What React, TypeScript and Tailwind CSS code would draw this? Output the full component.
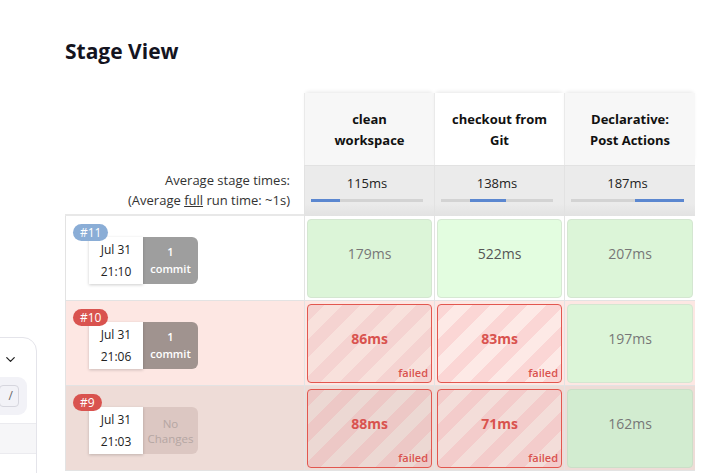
import { ChevronDown } from "lucide-react"

type Cell = { time: string; failed?: boolean; tone: string; stripes?: string }

interface RowProps {
  id: string
  badge: string
  time: string
  rowBg: string
  changes: "commit" | "none"
  changeBg: string
  cells: Cell[]
}

const stages = [
  { name: ["clean", "workspace"], avg: "115ms", bg: "bg-[#f7f7f7]" },
  { name: ["checkout from", "Git"], avg: "138ms", bg: "bg-white" },
  { name: ["Declarative:", "Post Actions"], avg: "187ms", bg: "bg-[#f7f7f7]" },
]

const rows: RowProps[] = [
  {
    id: "#11",
    badge: "bg-[#8aadd6]",
    time: "21:10",
    rowBg: "bg-white",
    changes: "commit",
    changeBg: "bg-[#9e9e9e]",
    cells: [
      { time: "179ms", tone: "bg-[#dcf5d8] border-[#d4e6d1] text-[#777]" },
      { time: "522ms", tone: "bg-[#e3fde0] border-[#d6e8d3] text-[#555]" },
      { time: "207ms", tone: "bg-[#dcf5d8] border-[#d4e6d1] text-[#777]" },
    ],
  },
  {
    id: "#10",
    badge: "bg-[#d9534f]",
    time: "21:06",
    rowBg: "bg-[#fde7e3]",
    changes: "commit",
    changeBg: "bg-[#a0938f]",
    cells: [
      {
        time: "86ms",
        failed: true,
        tone: "border-[#e2574f]",
        stripes:
          "bg-[repeating-linear-gradient(-45deg,#f5d3d1_0px,#f5d3d1_13px,#f8e1dc_13px,#f8e1dc_26px)]",
      },
      {
        time: "83ms",
        failed: true,
        tone: "border-[#e2574f]",
        stripes:
          "bg-[repeating-linear-gradient(-45deg,#fbd6d5_0px,#fbd6d5_13px,#fde9e6_13px,#fde9e6_26px)]",
      },
      { time: "197ms", tone: "bg-[#dcf5d8] border-[#d4e6d1] text-[#777]" },
    ],
  },
  {
    id: "#9",
    badge: "bg-[#d9534f]",
    time: "21:03",
    rowBg: "bg-[#eedcd7]",
    changes: "none",
    changeBg: "bg-[#dcc7c2]",
    cells: [
      {
        time: "88ms",
        failed: true,
        tone: "border-[#e2574f]",
        stripes:
          "bg-[repeating-linear-gradient(-45deg,#edc8c6_0px,#edc8c6_13px,#ecd8d3_13px,#ecd8d3_26px)]",
      },
      {
        time: "71ms",
        failed: true,
        tone: "border-[#e2574f]",
        stripes:
          "bg-[repeating-linear-gradient(-45deg,#f3cccb_0px,#f3cccb_13px,#f3ddd9_13px,#f3ddd9_26px)]",
      },
      { time: "162ms", tone: "bg-[#d2ecd0] border-[#cbdfc8] text-[#777]" },
    ],
  },
]

const bars = [
  { left: "left-0", width: "w-[26%]" },
  { left: "left-[26%]", width: "w-[32%]" },
  { left: "left-[57%]", width: "w-[43%]" },
]

function BuildCell({ row }: { row: RowProps }) {
  return (
    <div className={`${row.rowBg} h-[85px] border-l border-b border-[#e3e3e3] relative`}>
      <div className="flex pt-[21px] pl-[23px]">
        {/* date */}
        <div className="w-[54px] h-[47px] bg-white shadow-[0_1px_3px_rgba(0,0,0,0.2)] flex flex-col items-center justify-center gap-[8px] text-[12px] leading-[14px] text-[#222] z-10">
          <span>Jul 31</span>
          <span>{row.time}</span>
        </div>
        {/* changes */}
        {row.changes === "commit" ? (
          <div
            className={`${row.changeBg} w-[55px] h-[47px] rounded-r-[6px] flex flex-col items-center justify-center pb-[2px] text-white text-[11px] leading-[17px] font-semibold`}
          >
            <span>1</span>
            <span>commit</span>
          </div>
        ) : (
          <div
            className={`${row.changeBg} w-[55px] h-[47px] rounded-r-[6px] flex flex-col items-center justify-center text-[#b5a6a2] text-[11.5px] leading-[15px]`}
          >
            <span>No</span>
            <span>Changes</span>
          </div>
        )}
      </div>
      <span
        className={`${row.badge} absolute left-[7px] top-[8px] h-[17px] px-[7px] rounded-full text-white text-[12px] leading-[17px] z-20`}
      >
        {row.id}
      </span>
    </div>
  )
}

function StageCell({ cell, rowBg }: { cell: Cell; rowBg: string }) {
  return (
    <div className={`${rowBg} h-[85px] border-l border-b border-[#e3e3e3] p-[2px] pt-[3px]`}>
      <div
        className={`${cell.failed ? cell.stripes : ""} ${cell.tone} relative h-[79px] border rounded-[4px] flex items-center justify-center pb-[10px]`}
      >
        {cell.failed ? (
          <>
            <span className="text-[#d9534f] text-[14px] font-bold">{cell.time}</span>
            <span className="absolute right-[3px] bottom-[1px] text-[#d9534f] text-[11px] font-semibold">
              failed
            </span>
          </>
        ) : (
          <span className="text-[14px]">{cell.time}</span>
        )}
      </div>
    </div>
  )
}

export default function App() {
  return (
    <div className="relative w-full h-[473px] overflow-hidden bg-white font-['Segoe_UI','Open_Sans',sans-serif] text-[#222]">
      <h1 className="pl-[65px] pt-[36px] text-[21px] font-bold text-[#14141f] leading-[30px]">
        Stage View
      </h1>

      <div className="ml-[65px] mt-[27px] grid grid-cols-[239px_130px_130px_131px] w-[630px]">
        {/* stage names */}
        <div className="h-[72px] bg-white" />
        {stages.map((s) => (
          <div
            key={s.name.join()}
            className={`${s.bg} h-[72px] border-l border-[#eaeaea] shadow-[0_-3px_4px_-2px_rgba(0,0,0,0.1)] flex flex-col items-center justify-center pt-[2px] text-[13px] font-bold leading-[21px] text-[#111]`}
          >
            <span>{s.name[0]}</span>
            <span>{s.name[1]}</span>
          </div>
        ))}

        {/* averages */}
        <div className="h-[51px] bg-white border-b-2 border-[#e8e8e8] flex flex-col items-end justify-center pr-[14px] text-[13px] leading-[20px] text-[#333]">
          <span>Average stage times:</span>
          <span>
            (Average <span className="underline">full</span> run time: ~1s)
          </span>
        </div>
        {stages.map((s, i) => (
          <div
            key={s.avg}
            className="h-[51px] bg-[linear-gradient(#ebebeb,#ebebeb_75%,#e2e2e2)] border-l border-t border-[#e2e2e2] pl-[6px] pr-[11px] pt-[8px] text-center"
          >
            <div className="text-[13px] leading-[18px] text-[#222]">{s.avg}</div>
            <div className="relative mt-[7px] h-[3px] bg-[#d3d3d3]">
              <div className={`absolute top-0 h-[3px] bg-[#5b87d0] ${bars[i].left} ${bars[i].width}`} />
            </div>
          </div>
        ))}

        {/* builds */}
        {rows.map((r) => (
          <div key={r.id} className="contents">
            <BuildCell row={r} />
            {r.cells.map((c, i) => (
              <StageCell key={i} cell={c} rowBg={r.rowBg} />
            ))}
          </div>
        ))}
      </div>

      {/* side panel peeking in from the left */}
      <div className="absolute left-[-20px] top-[337px] w-[57px] h-[150px] bg-white border border-[#e4e4ea] rounded-tr-[14px]">
        <div className="flex justify-end pr-[18px] pt-[14px]">
          <ChevronDown size={15} strokeWidth={2} className="text-[#222]" />
        </div>
        <div className="mt-[10px] ml-[4px] w-[42px] h-[38px] bg-[#f2f2f7] rounded-[9px] flex items-center justify-end pr-[8px]">
          <span className="w-[20px] h-[22px] border border-[#d6d6de] rounded-[4px] text-[12px] leading-[20px] text-right pr-[5px] text-[#666]">
            /
          </span>
        </div>
        <div className="mt-[8px] h-[31px] bg-[#f6f6f8] border-t border-b border-[#ebebef]" />
      </div>
    </div>
  )
}
